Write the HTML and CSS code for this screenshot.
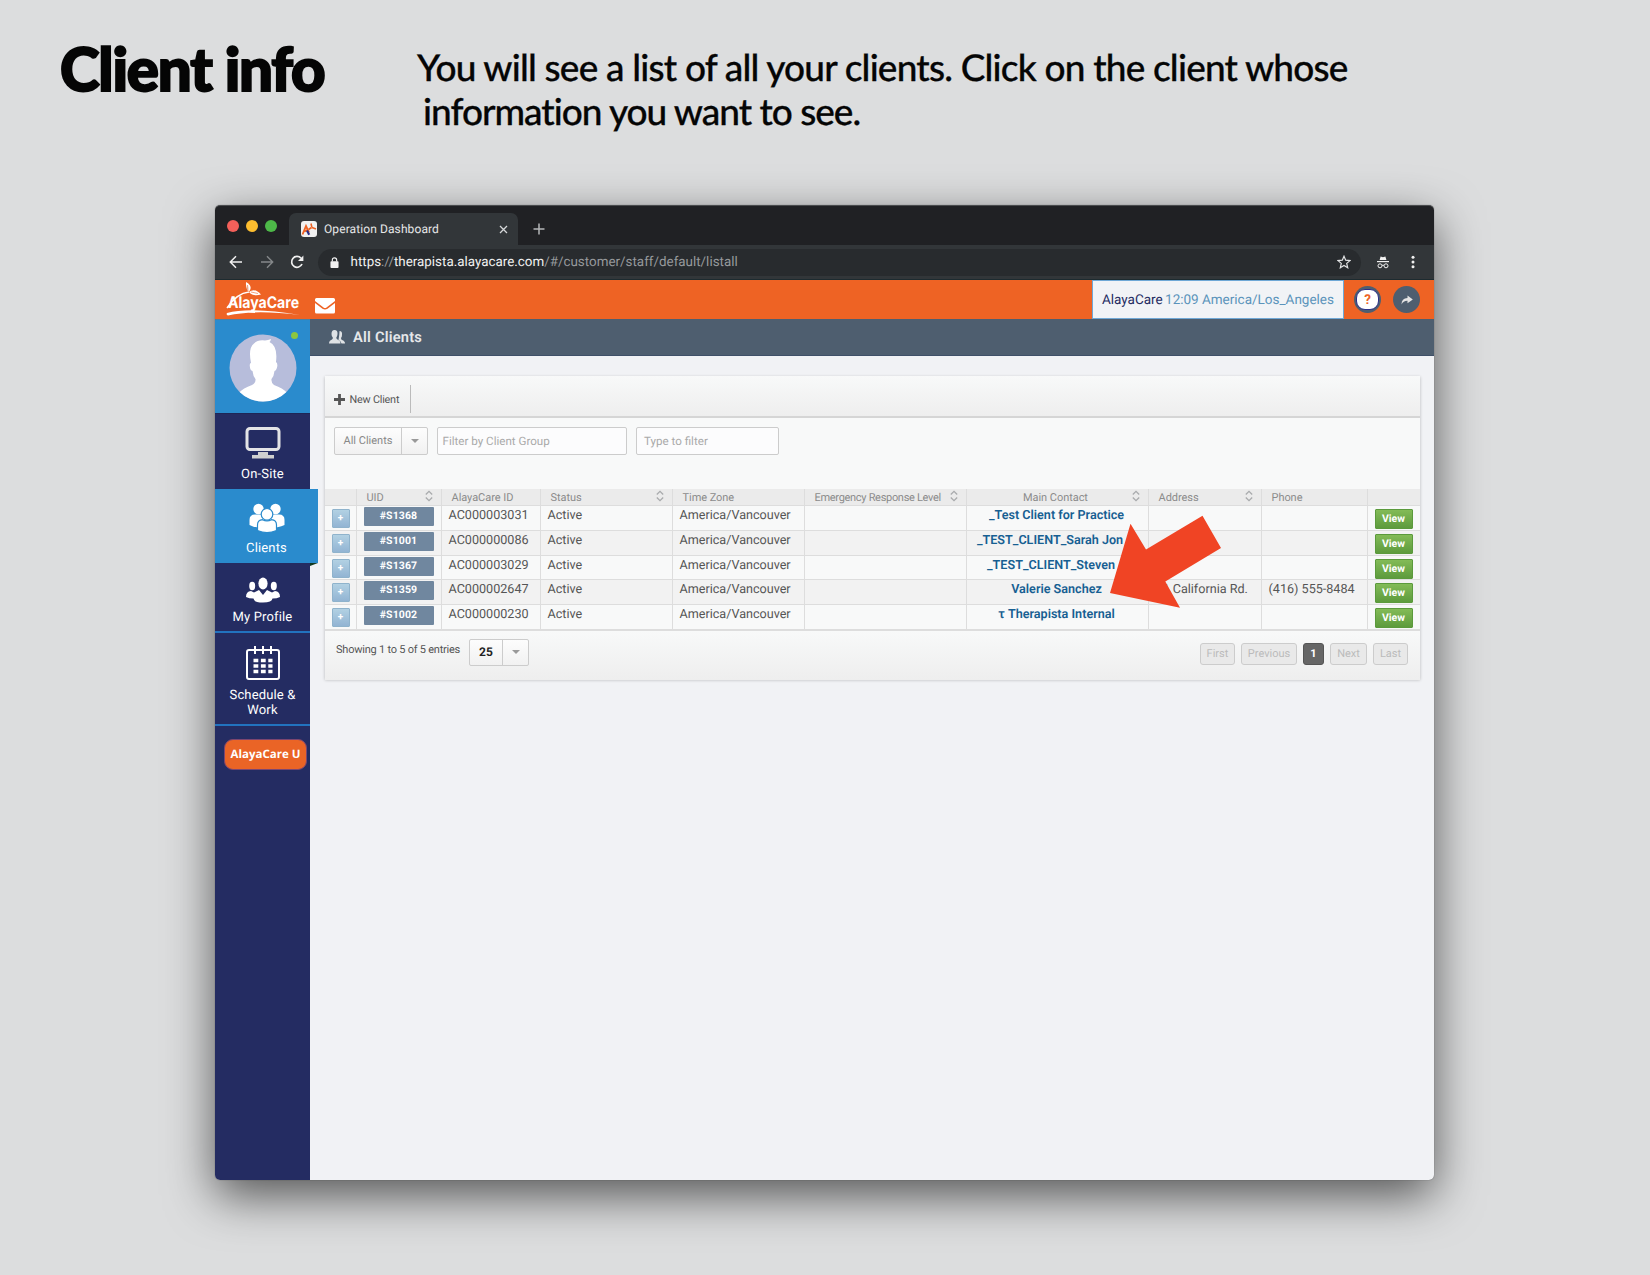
FILE: index.html
```html
<!DOCTYPE html>
<html lang="en">
<head>
    <meta charset="UTF-8">
    <meta name="viewport" content="width=device-width, initial-scale=1.0">
    <title>Client info</title>
    <link rel="stylesheet" href="styles.css">
</head>
<body>

<!-- Shared icons -->
<svg class="defs" width="0" height="0">
    <symbol id="sort" viewBox="0 0 8 12">
        <path d="M.8 4.500 4 1.300 7.200 4.500M.8 7.500 4 10.700 7.200 7.500" fill="none" stroke="#a9abad" stroke-width="1.300"/>
    </symbol>
</svg>

<header class="intro">
    <h1>Client info</h1>
    <p><span class="line-one">You will see a list of all your clients. Click on the client whose</span><br><span class="line-two">information you want to see.</span></p>
</header>

<div class="window">

    <!-- Browser tabs -->
    <div class="tabs">
        <div class="lights">
            <span class="light red"></span>
            <span class="light yellow"></span>
            <span class="light green"></span>
        </div>
        <div class="tab">
            <svg class="favicon" viewBox="0 0 16 16" width="16" height="16">
                <rect width="16" height="16" rx="3" fill="#f1f1f1"/>
                <path d="M1.500 13.500 5 5 8 11.500M3.500 10.500 7.500 8.500" fill="none" stroke="#ee6324" stroke-width="1.900"/>
                <path d="M6 9.500 8.200 13.800" stroke="#2b2f88" stroke-width="2.200"/>
                <path d="M7.500 8.500 10.500 6.500M10.800 6.200 10 2.500M11 6.500 15 8" stroke="#ee6324" stroke-width="1.600"/>
            </svg>
            <span class="tab-title">Operation Dashboard</span>
            <svg class="tab-close" viewBox="0 0 9 9" width="9" height="9"><path d="M1 1 8 8M8 1 1 8" stroke="#d5d7d9" stroke-width="1.300"/></svg>
        </div>
        <svg class="new-tab" viewBox="0 0 12 12" width="12" height="12"><path d="M6 .5V11.500M.5 6H11.500" stroke="#b4b6b8" stroke-width="1.500"/></svg>
    </div>

    <!-- Address bar -->
    <div class="toolbar">
        <svg viewBox="0 0 14 14" width="14" height="14"><path d="M13 7H1.500M7 1.200 1.300 7 7 12.800" fill="none" stroke="#f1f1f1" stroke-width="1.500"/></svg>
        <svg viewBox="0 0 14 14" width="14" height="14"><path d="M1 7H12.500M7 1.200 12.700 7 7 12.800" fill="none" stroke="#85888a" stroke-width="1.400"/></svg>
        <svg viewBox="0 0 14 14" width="14" height="14"><path d="M12 9A5.400 5.400 0 1 1 11 3.200" fill="none" stroke="#f1f1f1" stroke-width="1.700"/><path d="M13.400.6V6H8Z" fill="#f1f1f1"/></svg>
        <div class="omnibox">
            <svg viewBox="0 0 10 12" width="9" height="11"><rect x=".5" y="4.500" width="9" height="7.500" rx="1" fill="#f1f1f1"/><path d="M2.600 5V3.200a2.400 2.400 0 0 1 4.800 0V5" fill="none" stroke="#f1f1f1" stroke-width="1.300"/></svg>
            <span class="url"><b>https</b>://<b>therapista.alayacare.com</b>/#/customer/staff/default/listall</span>
            <svg class="star" viewBox="0 0 14 14" width="14" height="14"><path d="M7 1.200 8.700 5.200 13 5.600 9.700 8.400 10.700 12.700 7 10.400 3.300 12.700 4.300 8.400 1 5.600 5.300 5.200Z" fill="none" stroke="#e3e4e5" stroke-width="1.200"/></svg>
        </div>
        <svg class="incognito" viewBox="0 0 12 13" width="12" height="13"><path d="M2.600 4 3.600.6 6 1.200 8.400.6 9.400 4Z" fill="#f1f1f1"/><path d="M0 5.600H12" stroke="#f1f1f1" stroke-width="1.200"/><g fill="none" stroke="#f1f1f1"><circle cx="3" cy="9.800" r="2"/><circle cx="9" cy="9.800" r="2"/><path d="M5 9.400Q6 8.800 7 9.400"/></g></svg>
        <svg class="menu" viewBox="0 0 4 14" width="4" height="14" fill="#f1f1f1"><circle cx="2" cy="2.200" r="1.500"/><circle cx="2" cy="7" r="1.500"/><circle cx="2" cy="11.800" r="1.500"/></svg>
    </div>

    <!-- App header -->
    <div class="app-header">
        <svg class="logo" viewBox="0 0 76 37" width="76" height="37">
            <text class="logo-text" x="2" y="26.500" textLength="71" lengthAdjust="spacingAndGlyphs">AlayaCare</text>
            <path d="M1 27Q11 12 23 11" fill="none" stroke="#fff" stroke-width="1.500"/>
            <path d="M22 11Q19.500 5 20 1Q25.500 4 24.500 8Q24 10 22 11Z" fill="#fff"/>
            <path d="M23 11Q29 6.500 35 13.500Q27 16 23 11Z" fill="#fff"/>
            <path d="M22 11Q22 6 21.500 4M25 11 32 12.500" stroke="#ee6324" stroke-width=".6"/>
            <path d="M1 32Q24 25.500 74 34Q28 28.500 2 34.500Q0 34 1 32Z" fill="#fff"/>
        </svg>
        <svg class="mail" viewBox="0 0 20 16" width="20" height="16"><path d="M1.500 0H18.500Q20 0 20 1.500V3L11.500 9.500Q10 10.500 8.500 9.500L0 3V1.500Q0 0 1.500 0ZM0 5 7.500 10.700Q10 12.300 12.500 10.700L20 5V14Q20 15.500 18.500 15.500H1.500Q0 15.500 0 14Z" fill="#fff"/></svg>
        <div class="clock"><span class="org">AlayaCare</span><span class="time">12:09</span><span class="zone">America/Los_Angeles</span></div>
        <div class="round help"><span>?</span></div>
        <div class="round"><svg viewBox="0 0 12 10" width="12" height="10"><path d="M.5 9.500Q.5 3.300 6.500 3V.5L11.800 4.500 6.500 8.300V5.800Q2.500 5.600.5 9.500Z" fill="#e4e4e4"/></svg></div>
    </div>

    <div class="app">

        <!-- Side menu -->
        <nav>
            <div class="avatar">
                <svg viewBox="0 0 68 68" width="68" height="68">
                    <defs><clipPath id="face"><circle cx="34" cy="34" r="33.500"/></clipPath></defs>
                    <circle cx="34" cy="34" r="33.500" fill="#b7bddb"/>
                    <path clip-path="url(#face)" fill="#fff" d="M22 29Q19 14 25 9.500Q29 5.500 36 6.500Q39 6 42 5Q41.500 7.500 40.500 8Q49 12 47 28Q49.500 30 47.500 35Q46.500 37 45.500 37Q45 42 42.500 45Q42 49 45 51Q54 54 58 59V68H10V59Q14 54 23 51Q27 49 26.500 45Q24 42 23.500 37Q21 36.500 20.800 32Q20.500 29 22 29Z"/>
                </svg>
                <span class="online"></span>
            </div>
            <a class="item onsite">
                <svg viewBox="0 0 36 32" width="36" height="32"><rect x="2" y="1.500" width="32" height="21" rx="3" fill="none" stroke="#e3e4e6" stroke-width="3"/><path d="M13 25H23V28H29V31.500H7V28H13Z" fill="#cfd0d0"/></svg>
                <span>On-Site</span>
            </a>
            <a class="item clients">
                <svg viewBox="0 0 36 30" width="36" height="30" fill="#fff">
                    <circle cx="9.500" cy="6" r="5.200"/><circle cx="26.500" cy="6" r="5.200"/>
                    <path d="M.5 22V17Q.5 11.500 6 11.500H30Q35.500 11.500 35.500 17V22Q30 25 18 25T.5 22Z"/>
                    <g stroke="#2a8bcd" stroke-width="1.200"><circle cx="18" cy="11.300" r="5.800"/><path d="M8.500 27.500V22Q8.500 17 13.500 16.700Q18 19 22.500 16.700Q27.500 17 27.500 22V27.500Q18 31.500 8.500 27.500Z"/></g>
                </svg>
                <span>Clients</span>
            </a>
            <a class="item profile">
                <svg viewBox="0 0 34 26" width="34" height="26" fill="#fff">
                    <ellipse cx="17" cy="6.500" rx="4.600" ry="5.900"/><ellipse cx="6.200" cy="9" rx="3" ry="4.200"/><ellipse cx="27.800" cy="9" rx="3" ry="4.200"/>
                    <path d="M0 20Q0 14.500 5 14L8 15.500 13 13 17 18 21 13 26 15.500 29 14Q34 14.500 34 20Q31 21.500 26.500 21.500Q26 25.500 17 25.500T7.500 21.500Q3 21.500 0 20Z"/>
                </svg>
                <span>My Profile</span>
            </a>
            <a class="item schedule">
                <svg viewBox="0 0 34 34" width="34" height="34">
                    <rect x="1" y="4" width="32" height="29" rx="2" fill="none" stroke="#fff" stroke-width="2"/>
                    <path d="M9 0V8M17 0V8M25 0V8" stroke="#fff" stroke-width="2"/>
                    <path d="M7.500 14.500H26.500M7.500 20H26.500M7.500 25.500H26.500" stroke="#fff" stroke-width="3.600" stroke-dasharray="4.800 2.600"/>
                </svg>
                <span>Schedule &amp;<br>Work</span>
            </a>
            <a class="alaya-u">AlayaCare U</a>
        </nav>

        <main>
            <div class="page-title">
                <svg viewBox="0 0 16 14" width="16" height="14"><path d="M10.500 1Q13.500 1 13 5Q13 7 12 8Q12 9.500 13 10Q16 11 16 13.500H12.500Q12 11 9.500 10Q10.500 4 10.500 1Z" fill="#dfe2e5"/><path d="M5.500 0Q8.800 0 8.500 4Q8.300 6.500 7.300 7.500Q7.300 9 8.500 9.500Q11.500 10.500 11.500 13.500H0Q0 10.500 3 9.500Q4 9 3.800 7.500Q2.500 6 2.500 4Q2.500 0 5.500 0Z" fill="#dfe2e5"/></svg>
                <h2>All Clients</h2>
            </div>

            <div class="panel">
                <div class="actions">
                    <a class="new-client"><svg viewBox="0 0 11 11" width="11" height="11"><path d="M5.500 0V11M0 5.500H11" stroke="#555" stroke-width="2.800"/></svg>New Client</a>
                </div>

                <div class="filters">
                    <div class="select"><span>All Clients</span><i></i></div>
                    <div class="field group">Filter by Client Group</div>
                    <div class="field type">Type to filter</div>
                </div>

                <!-- Clients list -->
                <div class="table">
                    <div class="row head">
                        <div></div>
                        <div>UID<svg><use href="#sort"/></svg></div>
                        <div>AlayaCare ID</div>
                        <div>Status<svg><use href="#sort"/></svg></div>
                        <div>Time Zone</div>
                        <div class="level-head">Emergency Response Level<svg><use href="#sort"/></svg></div>
                        <div class="contact-head">Main Contact<svg><use href="#sort"/></svg></div>
                        <div>Address<svg><use href="#sort"/></svg></div>
                        <div>Phone</div>
                        <div></div>
                    </div>
                    <div class="row">
                        <div><span class="expand">+</span></div>
                        <div><span class="uid">#S1368</span></div>
                        <div>AC000003031</div>
                        <div>Active</div>
                        <div>America/Vancouver</div>
                        <div></div>
                        <div class="contact">_Test Client for Practice</div>
                        <div></div>
                        <div></div>
                        <div><span class="view">View</span></div>
                    </div>
                    <div class="row">
                        <div><span class="expand">+</span></div>
                        <div><span class="uid">#S1001</span></div>
                        <div>AC000000086</div>
                        <div>Active</div>
                        <div>America/Vancouver</div>
                        <div></div>
                        <div class="contact sarah">_TEST_CLIENT_Sarah Jon</div>
                        <div></div>
                        <div></div>
                        <div><span class="view">View</span></div>
                    </div>
                    <div class="row">
                        <div><span class="expand">+</span></div>
                        <div><span class="uid">#S1367</span></div>
                        <div>AC000003029</div>
                        <div>Active</div>
                        <div>America/Vancouver</div>
                        <div></div>
                        <div class="contact steven">_TEST_CLIENT_Steven</div>
                        <div></div>
                        <div></div>
                        <div><span class="view">View</span></div>
                    </div>
                    <div class="row">
                        <div><span class="expand">+</span></div>
                        <div><span class="uid">#S1359</span></div>
                        <div>AC000002647</div>
                        <div>Active</div>
                        <div>America/Vancouver</div>
                        <div></div>
                        <div class="contact">Valerie Sanchez</div>
                        <div class="address">1 California Rd.</div>
                        <div>(416) 555-8484</div>
                        <div><span class="view">View</span></div>
                    </div>
                    <div class="row">
                        <div><span class="expand">+</span></div>
                        <div><span class="uid">#S1002</span></div>
                        <div>AC000000230</div>
                        <div>Active</div>
                        <div>America/Vancouver</div>
                        <div></div>
                        <div class="contact">τ Therapista Internal</div>
                        <div></div>
                        <div></div>
                        <div><span class="view">View</span></div>
                    </div>
                </div>

                <div class="table-footer">
                    <span class="showing">Showing 1 to 5 of 5 entries</span>
                    <div class="select count"><span>25</span><i></i></div>
                    <div class="pages">
                        <span class="first">First</span>
                        <span class="previous">Previous</span>
                        <span class="current">1</span>
                        <span class="next">Next</span>
                        <span class="last">Last</span>
                    </div>
                </div>
            </div>
        </main>
    </div>

    <!-- Pointer to the client name -->
    <svg class="arrow" viewBox="0 0 111 93" width="111" height="93"><path d="M92.500.8 111 33 55.300 66.500 70 92.700 0 78 20.500 8.800 36 34.500Z" fill="#f04424"/></svg>
</div>

</body>
</html>
```

FILE: styles.css
```css
* {
    box-sizing: border-box;
}
body {
    margin: 0;
    width: 1650px;
    height: 1275px;
    overflow: hidden;
    background-color: #dcddde;
    font-family: Roboto, sans-serif;
    color: #555;
    text-rendering: geometricPrecision;
}
svg {
    display: block;
    flex: none;
}
.defs {
    position: absolute;
}

/* Intro text */
.intro {
    display: flex;
    height: 205px;
    color: #050505;
    font-family: Lato, sans-serif;
}
.intro h1 {
    margin: 0;
    width: 417px;
    padding: 32px 0 0 60px;
    font-size: 60px;
    line-height: 72px;
    font-weight: 900;
    letter-spacing: -1.2px;
    white-space: nowrap;
    -webkit-text-stroke: 2px #050505;
}
.intro p {
    margin: 0;
    padding-top: 45px;
    font-size: 37px;
    line-height: 44px;
    font-weight: 500;
    white-space: nowrap;
    -webkit-text-stroke: 0.3px #050505;
}
.line-one {
    letter-spacing: -0.8px;
}
.line-two {
    margin-left: 6px;
    letter-spacing: -1px;
}

/* Browser window */
.window {
    position: relative;
    display: flex;
    flex-direction: column;
    width: 1219px;
    height: 975px;
    margin-left: 215px;
    border-radius: 5px;
    background-color: #f1f2f5;
    box-shadow: 0 16px 48px rgba(0, 0, 0, 0.62), 0 0 1px #555;
}
.tabs {
    display: flex;
    height: 40px;
    background-color: #202124;
    border-radius: 5px 5px 0 0;
    border-top: 1px solid #4a4c4e;
}
.lights {
    display: flex;
    gap: 7px;
    width: 74px;
    padding: 14px 0 0 12px;
}
.light {
    width: 12px;
    height: 12px;
    border-radius: 50%;
}
.red {
    background-color: #f4605a;
}
.yellow {
    background-color: #fdbd2f;
}
.green {
    background-color: #4db848;
}
.tab {
    display: flex;
    align-items: center;
    width: 229px;
    height: 32px;
    margin-top: 7px;
    padding: 0 10px 0 12px;
    border-radius: 7px 7px 0 0;
    background-color: #323639;
}
.tab-title {
    flex: 1;
    margin-left: 7px;
    font-size: 12px;
    letter-spacing: 0.1px;
    color: #e6e7e8;
}
.new-tab {
    margin: 17px 0 0 15px;
}
.toolbar {
    display: flex;
    align-items: center;
    height: 35px;
    padding: 0 19px 0 14px;
    background-color: #323639;
    border-bottom: 1px solid #1d2b30;
}
.toolbar > svg {
    margin-right: 16.5px;
}
.omnibox {
    display: flex;
    align-items: center;
    flex: 1;
    height: 27px;
    margin-left: -3px;
    padding: 0 10px 0 12px;
    border-radius: 14px;
    background-color: #282b2e;
}
.url {
    flex: 1;
    margin-left: 12px;
    padding-top: 1px;
    font-size: 13.4px;
    color: #96999c;
}
.url b {
    font-weight: 400;
    color: #f1f1f1;
}
.toolbar > .incognito {
    margin: 0 22px 0 16px;
}
.toolbar > .menu {
    margin: 0;
}

/* App header */
.app-header {
    display: flex;
    height: 39px;
    padding-left: 11px;
    background-color: #ee6324;
}
.logo {
    margin-top: 1px;
}
.logo-text {
    font-family: Inter, sans-serif;
    font-size: 16px;
    font-weight: 700;
    fill: #fff;
}
.mail {
    margin: 18px 0 0 13px;
}
.clock {
    display: flex;
    width: 252px;
    margin-left: auto;
    padding: 0 9px;
    border: 1px solid #6fa8d6;
    background-color: #f1f3f6;
    font-size: 13.5px;
    line-height: 39px;
    color: #5b93bb;
    white-space: nowrap;
}
.org {
    width: 65px;
    color: #242c62;
}
.time {
    width: 38px;
}
.round {
    display: flex;
    align-items: center;
    justify-content: center;
    width: 27px;
    height: 27px;
    margin: 6px 14px 0 12px;
    border-radius: 50%;
    background-color: #4e5e6f;
}
.help {
    margin: 6px 0 0 10px;
}
.help span {
    width: 23px;
    height: 21px;
    border: 1.5px solid #2b2f88;
    border-radius: 9px;
    background-color: #fff;
    color: #ee6324;
    font-size: 13.5px;
    line-height: 20px;
    font-weight: 700;
    text-align: center;
}
.app {
    display: flex;
    flex: 1;
}

/* Side menu */
nav {
    width: 95px;
    background-color: #242c62;
    border-radius: 0 0 0 5px;
    font-size: 13px;
    color: #fff;
}
.avatar {
    position: relative;
    height: 94px;
    padding: 14px 0 0 13.5px;
    background-color: #2a8bcd;
    border-top: 1px solid #4d7fa0;
}
.online {
    position: absolute;
    top: 12px;
    left: 76px;
    width: 7px;
    height: 7px;
    border-radius: 50%;
    background-color: #8cc63f;
}
.item {
    display: flex;
    flex-direction: column;
    align-items: center;
    text-align: center;
    line-height: 15px;
    letter-spacing: 0.15px;
}
.onsite {
    height: 76px;
    padding-top: 13px;
    gap: 8px;
    border-top: 1px solid #1e2656;
}
.clients {
    position: relative;
    width: 103px;
    height: 74px;
    padding-top: 14px;
    gap: 8px;
    background-color: #2a8bcd;
}
.clients::after {
    content: "";
    position: absolute;
    right: 0;
    bottom: -3px;
    border-top: 3px solid #123a22;
    border-right: 8px solid transparent;
}
.profile {
    height: 70px;
    padding-top: 14px;
    gap: 7px;
    border-bottom: 2px solid #2273bf;
}
.schedule {
    height: 93px;
    padding-top: 13px;
    gap: 8px;
    border-bottom: 2px solid #2273bf;
}
.alaya-u {
    display: block;
    width: 83px;
    height: 31px;
    margin: 13px 0 0 9px;
    border-radius: 9px;
    border: 1px solid #7c4670;
    background-color: #ea6426;
    font-family: "Open Sans", sans-serif;
    font-size: 11.5px;
    font-weight: 700;
    line-height: 29px;
    text-align: center;
    white-space: nowrap;
}

/* Clients page */
main {
    flex: 1;
}
.page-title {
    display: flex;
    align-items: center;
    height: 37px;
    padding-left: 19px;
    background-color: #4e5e6f;
    border-bottom: 1px solid #3f5068;
}
.page-title h2 {
    margin: 0 0 0 8px;
    font-size: 14.7px;
    font-weight: 600;
    letter-spacing: 0.2px;
    color: #e6e8ea;
}
.panel {
    width: 1095px;
    height: 303px;
    margin: 20px 0 0 15px;
    background-color: #f8f9f9;
    box-shadow: 0 1px 3px rgba(0, 0, 0, 0.25);
}
.actions {
    height: 42px;
    padding-top: 9px;
    background: linear-gradient(#f8f9f9, #eee);
    border-bottom: 2px solid #d5d5d5;
}
.new-client {
    display: flex;
    align-items: center;
    width: 86px;
    height: 28px;
    padding-left: 9px;
    gap: 4.5px;
    border-right: 1px solid #bbb;
    font-size: 10.8px;
    letter-spacing: -0.2px;
    white-space: nowrap;
}
.filters {
    display: flex;
    height: 71px;
    padding: 9px 9px;
    font-size: 11px;
}
.select {
    display: flex;
    width: 94px;
    height: 28px;
    border: 1px solid #ccc;
    border-radius: 2px;
    background: linear-gradient(#fdfdfd, #f1f1f1);
    color: #888;
    line-height: 26px;
}
.select span {
    flex: 1;
    text-align: center;
    border-right: 1px solid #ccc;
}
.select i {
    width: 25px;
    display: flex;
    align-items: center;
    justify-content: center;
}
.select i::after {
    content: "";
    border: 4px solid transparent;
    border-top: 4px solid #999;
    border-bottom: 0;
}
.field {
    height: 28px;
    margin-left: 9px;
    border: 1px solid #ccc;
    background-color: #fcfcfd;
    border-radius: 2px;
    line-height: 26px;
    font-size: 11.6px;
    color: #aaa;
}
.group {
    width: 190px;
    padding-left: 4.5px;
}
.type {
    width: 143px;
    padding-left: 7px;
    line-height: 27px;
}
.row {
    display: grid;
    grid-template-columns: 32px 85px 99px 132px 132px 162px 182px 113px 106px 52px;
    height: 24.8px;
    border-bottom: 1px solid #ddd;
    font-size: 12.6px;
    line-height: 19px;
}
.row:nth-child(odd) {
    background-color: #f2f2f2;
}
.row > div {
    padding-left: 6.5px;
    border-right: 1px solid #ddd;
    white-space: nowrap;
}
.row > div:last-child {
    border-right: 0;
}
.row.head {
    height: 17px;
    background-color: #ebebeb;
    font-size: 11px;
    letter-spacing: -0.05px;
    line-height: 17px;
    color: #8c8c8c;
}
.head > div {
    display: flex;
    justify-content: space-between;
    padding: 0 8px 0 9.5px;
}
.head svg {
    width: 8px;
    height: 12px;
    margin-top: 1px;
}
.head > .level-head {
    letter-spacing: -0.3px;
}
.head > .contact-head {
    padding: 0 8px 0 56px;
}
.expand {
    display: block;
    width: 18px;
    height: 19px;
    margin-top: 3px;
    border: 1px solid #8fb3cc;
    border-radius: 1px;
    background: linear-gradient(#b2d1e3, #92b4d3);
    color: #fff;
    font-size: 10px;
    font-weight: 700;
    line-height: 17px;
    text-align: center;
}
.uid {
    display: block;
    width: 70px;
    height: 19px;
    margin-top: 1px;
    border-radius: 1px;
    background-color: #70879f;
    color: #fff;
    font-size: 10.5px;
    font-weight: 700;
    letter-spacing: 0.1px;
    line-height: 18px;
    text-align: center;
}
.row > .contact {
    padding: 0 2px 0 0;
    text-align: center;
    font-weight: 600;
    color: #175f92;
}
.row > .sarah {
    padding-right: 15px;
}
.row > .steven {
    padding-right: 13px;
}
.row > .address {
    padding-left: 13.5px;
}
.view {
    display: block;
    width: 38px;
    height: 20px;
    margin-top: 3px;
    border: 1px solid #5b9a3c;
    border-radius: 1px;
    background: linear-gradient(#83bb57, #5d9b3d);
    color: #fff;
    font-size: 10.5px;
    font-weight: 700;
    line-height: 18px;
    text-align: center;
}
.table-footer {
    display: flex;
    height: 50px;
    padding: 8px 12px 0 11px;
    background: linear-gradient(#f8f9f9, #eee);
    border-top: 1px solid #ddd;
    font-size: 11px;
}
.showing {
    width: 133px;
    letter-spacing: -0.23px;
    line-height: 21px;
    white-space: nowrap;
}
.count {
    width: 60px;
    height: 27px;
    line-height: 25px;
}
.count span {
    color: #222;
    font-size: 12px;
    font-weight: 700;
}
.pages {
    display: flex;
    gap: 6px;
    margin: 4px 0 0 auto;
    height: 22px;
    line-height: 20px;
    text-align: center;
}
.pages span {
    border: 1px solid #ccc;
    border-radius: 3px;
    background-color: #e9e9e9;
    color: #bbb;
}
.first, .last {
    width: 35px;
}
.previous {
    width: 56px;
}
.next {
    width: 37px;
}
.pages .current {
    width: 21px;
    border-color: #555;
    background-color: #666;
    color: #fff;
    font-weight: 700;
}

.arrow {
    position: absolute;
    top: 309.5px;
    left: 895px;
}
```
